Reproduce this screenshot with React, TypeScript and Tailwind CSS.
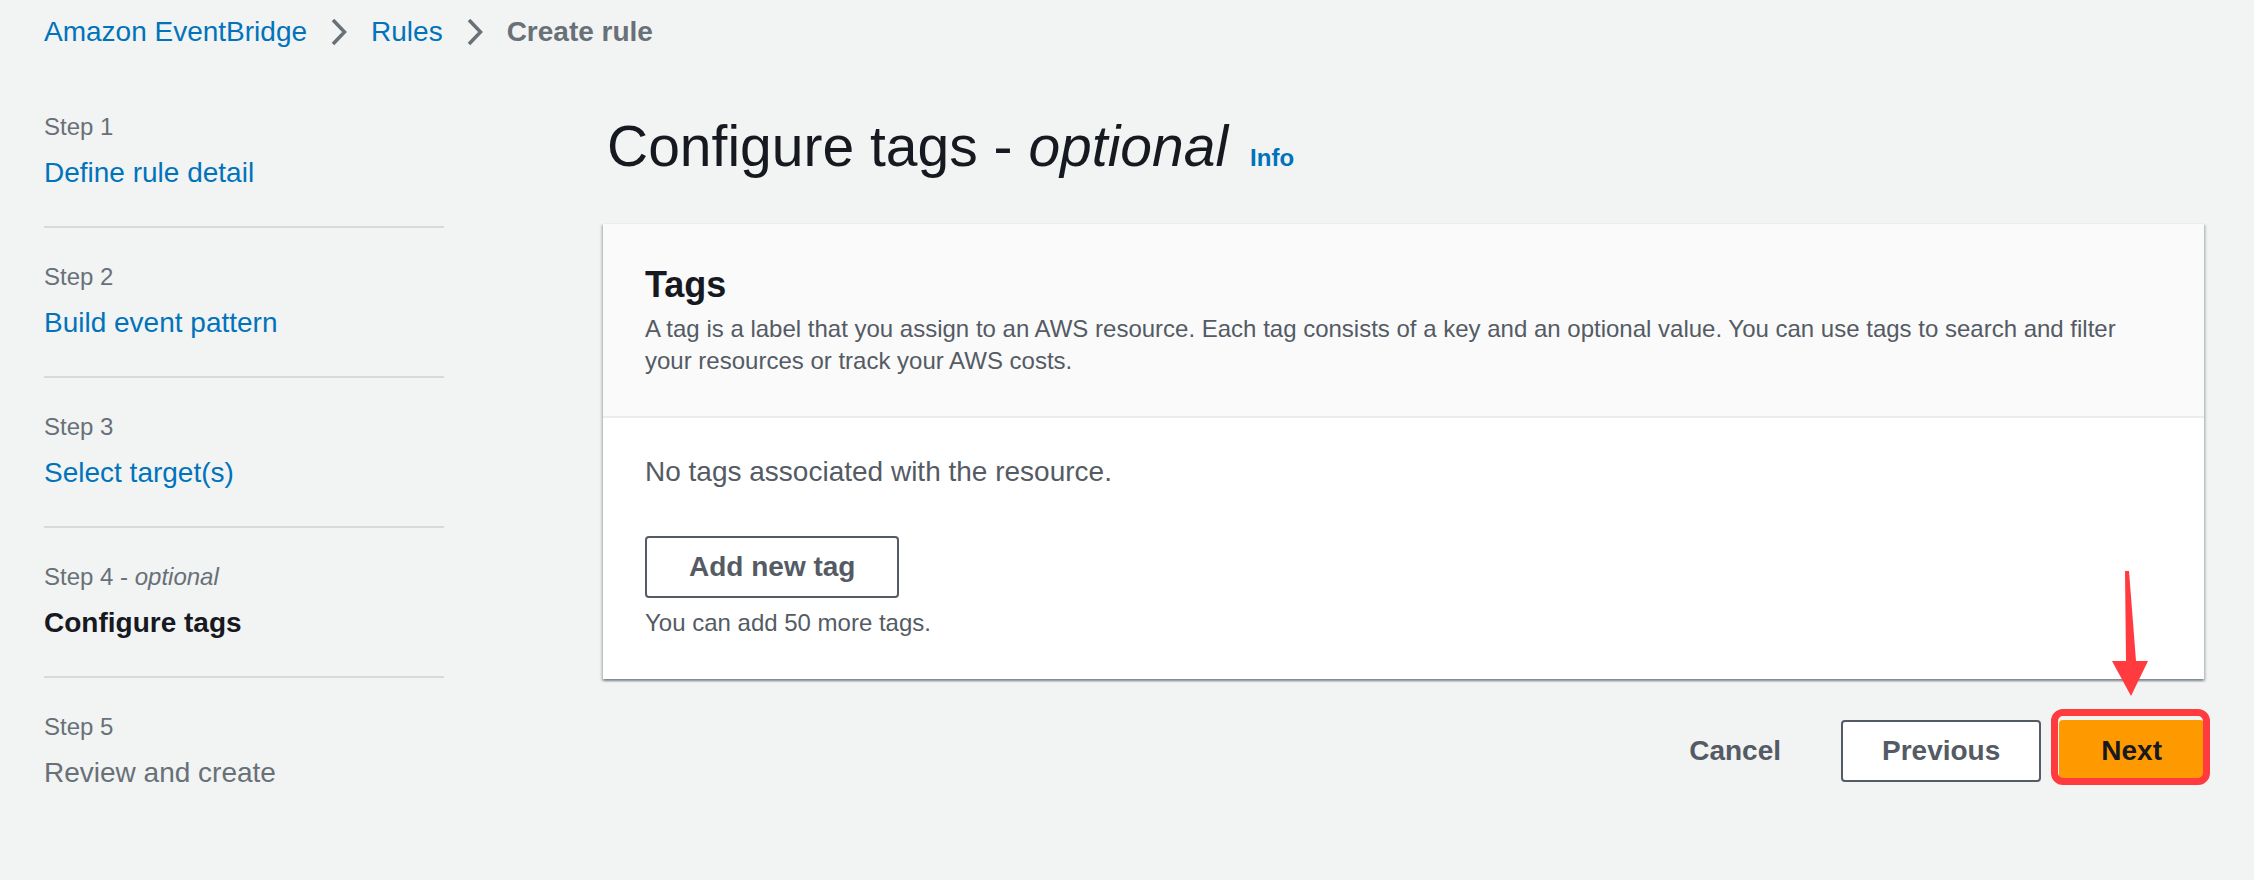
import React from 'react';

type Step = { label: React.ReactNode; title: string; state: 'done' | 'current' | 'todo' };

const steps: Step[] = [
  { label: 'Step 1', title: 'Define rule detail', state: 'done' },
  { label: 'Step 2', title: 'Build event pattern', state: 'done' },
  { label: 'Step 3', title: 'Select target(s)', state: 'done' },
  {
    label: (
      <>
        Step 4 - <i>optional</i>
      </>
    ),
    title: 'Configure tags',
    state: 'current',
  },
  { label: 'Step 5', title: 'Review and create', state: 'todo' },
];

function Chevron() {
  return (
    <svg width="16" height="28" viewBox="0 0 16 28" className="mx-[24px] shrink-0">
      <polyline points="2,2 13.5,14 2,26" fill="none" stroke="#687078" strokeWidth="3.5" />
    </svg>
  );
}

function StepItem({ step, last }: { step: Step; last: boolean }) {
  const titleCls =
    step.state === 'done'
      ? 'text-[#0073bb]'
      : step.state === 'current'
        ? 'font-bold text-[#16191f]'
        : 'text-[#687078]';
  return (
    <li className={`pt-[33px] pb-[33px] ${last ? '' : 'border-b-2 border-[#d5dbdb]'}`}>
      <div className="text-[24px] leading-[32px] text-[#687078]">{step.label}</div>
      <div className={`mt-[10px] text-[28px] leading-[40px] ${titleCls}`}>{step.title}</div>
    </li>
  );
}

export default function App() {
  return (
    <div className="h-[880px] w-full overflow-hidden bg-[#f2f3f3] font-['Liberation_Sans',Arial,sans-serif]">
      {/* Breadcrumbs */}
      <nav className="flex items-center pl-[44px] pt-[12px] text-[28px] leading-[40px]">
        <span className="text-[#0073bb]">Amazon EventBridge</span>
        <Chevron />
        <span className="text-[#0073bb]">Rules</span>
        <Chevron />
        <span className="font-bold text-[#687078]">Create rule</span>
      </nav>

      <div className="flex">
        {/* Wizard steps */}
        <ul className="ml-[44px] mt-[26px] w-[400px] shrink-0">
          {steps.map((s, i) => (
            <StepItem key={i} step={s} last={i === steps.length - 1} />
          ))}
        </ul>

        {/* Main content */}
        <main className="ml-[159px] mr-[50px] flex-1 pt-[58px]">
          <div className="flex h-[75px] items-baseline pl-[4px]">
            <h1 className="text-[57px] leading-[72px] font-normal text-[#16191f]">
              Configure tags - <i>optional</i>
            </h1>
            <span className="ml-[22px] text-[24px] font-bold text-[#0073bb]">Info</span>
          </div>

          <section className="mt-[38px] border-t border-[#eaeded] bg-white shadow-[0_2px_2px_0_rgba(0,28,36,0.3),2px_2px_2px_0_rgba(0,28,36,0.15),-2px_2px_2px_0_rgba(0,28,36,0.15)]">
            <div className="border-b-2 border-[#eaeded] bg-[#fafafa] px-[42px] pt-[39px] pb-[39px]">
              <h2 className="text-[36px] leading-[44px] font-bold text-[#16191f]">Tags</h2>
              <p className="mt-[6px] max-w-[1500px] text-[24px] leading-[32px] text-[#545b64]">
                A tag is a label that you assign to an AWS resource. Each tag consists of a key and an optional value. You
                can use tags to search and filter your resources or track your AWS costs.
              </p>
            </div>
            <div className="px-[42px] pt-[34px] pb-[40px]">
              <p className="text-[28px] leading-[40px] text-[#545b64]">No tags associated with the resource.</p>
              <button className="mt-[44px] h-[62px] rounded-[4px] border-2 border-[#545b64] bg-white px-[42px] text-[28px] leading-[40px] font-bold text-[#545b64]">
                Add new tag
              </button>
              <p className="mt-[9px] text-[24px] leading-[32px] text-[#545b64]">You can add 50 more tags.</p>
            </div>
          </section>

          {/* Footer actions */}
          <div className="mt-[41px] flex justify-end gap-[18px]">
            <button className="h-[62px] border-2 border-transparent px-[40px] text-[28px] leading-[40px] font-bold text-[#545b64]">
              Cancel
            </button>
            <button className="h-[62px] rounded-[4px] border-2 border-[#545b64] bg-white px-[39px] text-[28px] leading-[40px] font-bold text-[#545b64]">
              Previous
            </button>
            <div className="relative">
              <button className="h-[62px] rounded-[4px] border-2 border-[#ff9900] bg-[#ff9900] px-[40px] text-[28px] leading-[40px] font-bold text-[#16191f]">
                Next
              </button>
              {/* annotation: red highlight + arrow */}
              <div className="pointer-events-none absolute left-[-8px] top-[-11px] h-[76px] w-[159px] rounded-[12px] border-[7px] border-[#ff3b3f]" />
              <svg
                className="pointer-events-none absolute left-[52px] top-[-150px]"
                width="40"
                height="128"
                viewBox="0 0 40 128"
              >
                <polygon points="14,1 18,1 25,91 37,91 20,126 1,91 15,91" fill="#ff3b3f" />
              </svg>
            </div>
          </div>
        </main>
      </div>
    </div>
  );
}
